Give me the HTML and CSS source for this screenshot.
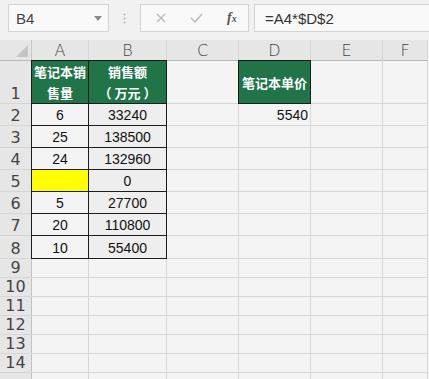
FILE: index.html
```html
<!DOCTYPE html>
<html lang="zh">
<head>
<meta charset="utf-8">
<link rel="stylesheet" href="styles.css">
</head>
<body>
<div class="toolbar">
  <div class="namebox">
    <span class="nb-text">B4</span>
    <svg class="nb-arrow" width="8" height="5" viewBox="0 0 8 5"><path d="M0 0 H8 L4 5 Z" fill="#8a8a8a"/></svg>
  </div>
  <div class="sep">
    <svg width="3" height="11" viewBox="0 0 3 11"><circle cx="1.5" cy="1.5" r="1" fill="#b5b5b5"/><circle cx="1.5" cy="5.5" r="1" fill="#b5b5b5"/><circle cx="1.5" cy="9.5" r="1" fill="#b5b5b5"/></svg>
  </div>
  <div class="fxbox">
    <svg class="ic-x" width="10" height="10" viewBox="0 0 10 10"><path d="M1 1 L9 9 M9 1 L1 9" stroke="#b8b8b8" stroke-width="1.3" fill="none"/></svg>
    <svg class="ic-ok" width="13" height="10" viewBox="0 0 13 10"><path d="M1 5 L5 9 L12 1" stroke="#b8b8b8" stroke-width="1.4" fill="none"/></svg>
    <span class="fx"><i>f</i><i class="fx-x">x</i></span>
  </div>
  <div class="formula">=A4*$D$2</div>
</div>

<div class="sheet">
  <div class="corner"><svg width="12" height="12" viewBox="0 0 12 12"><path d="M12 0 V12 H0 Z" fill="#c4c4c4"/></svg></div>
  <div class="colh">A</div><div class="colh">B</div><div class="colh">C</div><div class="colh">D</div><div class="colh">E</div><div class="colh">F</div>

  <div class="rowh">1</div>
  <div class="cell hd bx"><span>笔记本销<br>售量</span></div>
  <div class="cell hd bx"><span>销售额<br><span class="paren pl">（</span>万元<span class="paren pr">）</span></span></div>
  <div class="cell"></div>
  <div class="cell hd bx"><span>笔记本单价</span></div>
  <div class="cell"></div><div class="cell"></div>

  <div class="rowh">2</div>
  <div class="cell num bx">6</div><div class="cell num bx b">33240</div><div class="cell"></div><div class="cell num right">5540</div><div class="cell"></div><div class="cell"></div>

  <div class="rowh">3</div>
  <div class="cell num bx">25</div><div class="cell num bx b">138500</div><div class="cell"></div><div class="cell"></div><div class="cell"></div><div class="cell"></div>

  <div class="rowh">4</div>
  <div class="cell num bx">24</div><div class="cell num bx b">132960</div><div class="cell"></div><div class="cell"></div><div class="cell"></div><div class="cell"></div>

  <div class="rowh">5</div>
  <div class="cell num bx yellow"></div><div class="cell num bx b">0</div><div class="cell"></div><div class="cell"></div><div class="cell"></div><div class="cell"></div>

  <div class="rowh">6</div>
  <div class="cell num bx">5</div><div class="cell num bx b">27700</div><div class="cell"></div><div class="cell"></div><div class="cell"></div><div class="cell"></div>

  <div class="rowh">7</div>
  <div class="cell num bx">20</div><div class="cell num bx b">110800</div><div class="cell"></div><div class="cell"></div><div class="cell"></div><div class="cell"></div>

  <div class="rowh">8</div>
  <div class="cell num bx">10</div><div class="cell num bx b">55400</div><div class="cell"></div><div class="cell"></div><div class="cell"></div><div class="cell"></div>

  <div class="rowh">9</div><div class="cell"></div><div class="cell"></div><div class="cell"></div><div class="cell"></div><div class="cell"></div><div class="cell"></div>
  <div class="rowh">10</div><div class="cell"></div><div class="cell"></div><div class="cell"></div><div class="cell"></div><div class="cell"></div><div class="cell"></div>
  <div class="rowh">11</div><div class="cell"></div><div class="cell"></div><div class="cell"></div><div class="cell"></div><div class="cell"></div><div class="cell"></div>
  <div class="rowh">12</div><div class="cell"></div><div class="cell"></div><div class="cell"></div><div class="cell"></div><div class="cell"></div><div class="cell"></div>
  <div class="rowh">13</div><div class="cell"></div><div class="cell"></div><div class="cell"></div><div class="cell"></div><div class="cell"></div><div class="cell"></div>
  <div class="rowh">14</div><div class="cell"></div><div class="cell"></div><div class="cell"></div><div class="cell"></div><div class="cell"></div><div class="cell"></div>
  <div class="rowh"></div><div class="cell"></div><div class="cell"></div><div class="cell"></div><div class="cell"></div><div class="cell"></div><div class="cell"></div>
</div>
</body>
</html>
```
FILE: styles.css
```css
html, body {
  margin: 0;
  padding: 0;
}
body {
  width: 429px;
  height: 379px;
  overflow: hidden;
  background: #f1f1f1;
  font-family: "Liberation Sans", "Noto Sans CJK SC", sans-serif;
}

.toolbar {
  display: flex;
  align-items: flex-start;
  height: 40px;
  padding: 4px 0 0 8px;
  box-sizing: border-box;
}
.namebox {
  width: 101px;
  height: 28px;
  box-sizing: border-box;
  border: 1px solid #d4d4d4;
  background: #f9f9f9;
  display: flex;
  align-items: center;
  justify-content: space-between;
  padding: 0 6px 0 7px;
}
.nb-text {
  font-size: 15px;
  color: #444;
}
.nb-arrow {
  margin-top: 1px;
}
.sep {
  width: 31px;
  height: 28px;
  display: flex;
  align-items: center;
  justify-content: center;
}
.fxbox {
  width: 109px;
  height: 28px;
  box-sizing: border-box;
  border: 1px solid #d4d4d4;
  background: #f9f9f9;
  display: flex;
  align-items: center;
  padding-left: 15px;
}
.ic-x {
  margin-right: 24px;
}
.ic-ok {
  margin-right: 24px;
}
.fx {
  font-family: "Liberation Serif", serif;
  font-size: 14px;
  color: #555;
  font-weight: bold;
}
.fx-x {
  font-size: 10px;
}
.formula {
  margin-left: 5px;
  flex: 1;
  height: 28px;
  box-sizing: border-box;
  border: 1px solid #d4d4d4;
  border-right: none;
  background: #f9f9f9;
  display: flex;
  align-items: center;
  padding-left: 10px;
  font-size: 15px;
  color: #333;
}

.sheet {
  display: grid;
  grid-template-columns: 31px 56px 77px 71px 71px 71px 1fr;
  grid-template-rows: 20px 42px repeat(6, 21px) 22px repeat(7, 18px);
  gap: 1px;
  width: 427px;
  height: 339px;
  overflow: hidden;
  background: #d6d6d6;
  border-right: 1px solid #d8d8d8;
}
.corner {
  background: #e6e6e6;
  display: flex;
  align-items: flex-end;
  justify-content: flex-end;
  padding: 0 3px 3px 0;
  box-shadow: 0 1px 0 #b8b8b8, 1px 0 0 #c6c6c6;
}
.colh {
  background: #e6e6e6;
  color: #444;
  font-family: "DejaVu Sans", sans-serif;
  font-weight: 300;
  font-size: 16px;
  display: flex;
  align-items: center;
  justify-content: center;
  box-shadow: 0 1px 0 #b8b8b8;
}
.rowh {
  background: #e6e6e6;
  color: #444;
  font-family: "DejaVu Sans", sans-serif;
  font-size: 16px;
  line-height: 18px;
  display: flex;
  align-items: flex-end;
  justify-content: center;
  box-shadow: 1px 0 0 #c2c2c2;
}
.cell {
  background: #f4f4f4;
}
.num {
  display: flex;
  align-items: flex-end;
  justify-content: center;
  font-size: 14px;
  line-height: 18px;
  color: #111;
  padding-bottom: 1px;
}
.right {
  justify-content: flex-end;
  padding-right: 2px;
}
.b {
  background: #eeeeee;
}
.bx {
  box-shadow: 0 0 0 1px #1c1c1c;
}
.yellow {
  background: #ffff00;
}
.hd {
  background: #207448;
  color: #fff;
  font-family: "Noto Sans CJK SC", sans-serif;
  font-weight: bold;
  font-size: 13px;
  line-height: 21px;
  display: flex;
  align-items: center;
  justify-content: center;
  text-align: center;
  white-space: nowrap;
}
.paren {
  display: inline-block;
}
.pl {
  margin-right: 3px;
}
.pr {
  margin-left: 3px;
}
```
